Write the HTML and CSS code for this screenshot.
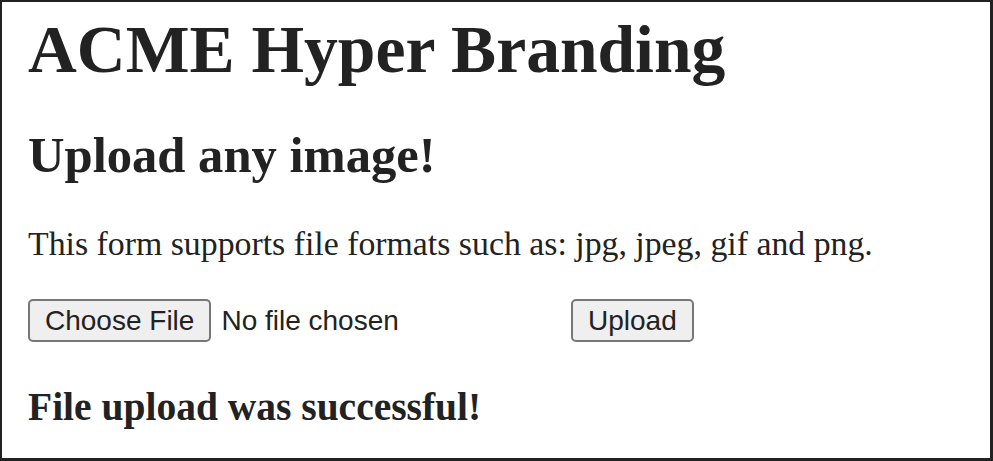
FILE: index.html
```html
<!DOCTYPE html>
<html>
<head>
<meta charset="utf-8">
<link rel="stylesheet" href="styles.css">
</head>
<body>
<div class="frame">
  <h1 class="title">ACME Hyper Branding</h1>
  <h2 class="subtitle">Upload any image!</h2>
  <p class="info">This form supports file formats such as: jpg, jpeg, gif and png.</p>
  <form class="upload">
    <div class="file-picker">
      <button type="button" class="btn">Choose File</button>
      <span class="file-name">No file chosen</span>
    </div>
    <button type="button" class="btn">Upload</button>
  </form>
  <h3 class="status">File upload was successful!</h3>
</div>
</body>
</html>
```
FILE: styles.css
```css
html, body {
  margin: 0;
  padding: 0;
  background: #fff;
}
.frame {
  box-sizing: border-box;
  width: 993px;
  height: 461px;
  border: 2px solid #222;
  border-right-width: 3px;
  border-bottom-width: 3px;
  padding: 0 26px;
  font-family: "Liberation Serif", serif;
  color: #222;
  overflow: hidden;
}
.title {
  font-size: 67.6px;
  font-weight: bold;
  margin: 8px 0 0;
  line-height: 80px;
}
.subtitle {
  font-size: 50.6px;
  margin: 35px 0 0;
  line-height: 60px;
}
.info {
  font-size: 33.8px;
  margin: 39px 0 0;
  line-height: 40px;
}
.upload {
  display: flex;
  align-items: center;
  margin-top: 35px;
}
.file-picker {
  display: flex;
  align-items: center;
  width: 543px;
}
.btn {
  font-family: "Liberation Sans", Arial, sans-serif;
  font-size: 28px;
  color: #222;
  background: #efefef;
  border: 2px solid #777;
  border-radius: 5px;
  padding: 0 15px;
  height: 43px;
}
.file-name {
  font-family: "Liberation Sans", Arial, sans-serif;
  font-size: 28px;
  margin-left: 10px;
}
.status {
  font-size: 39.5px;
  margin: 42px 0 0;
  line-height: 46px;
}
```
